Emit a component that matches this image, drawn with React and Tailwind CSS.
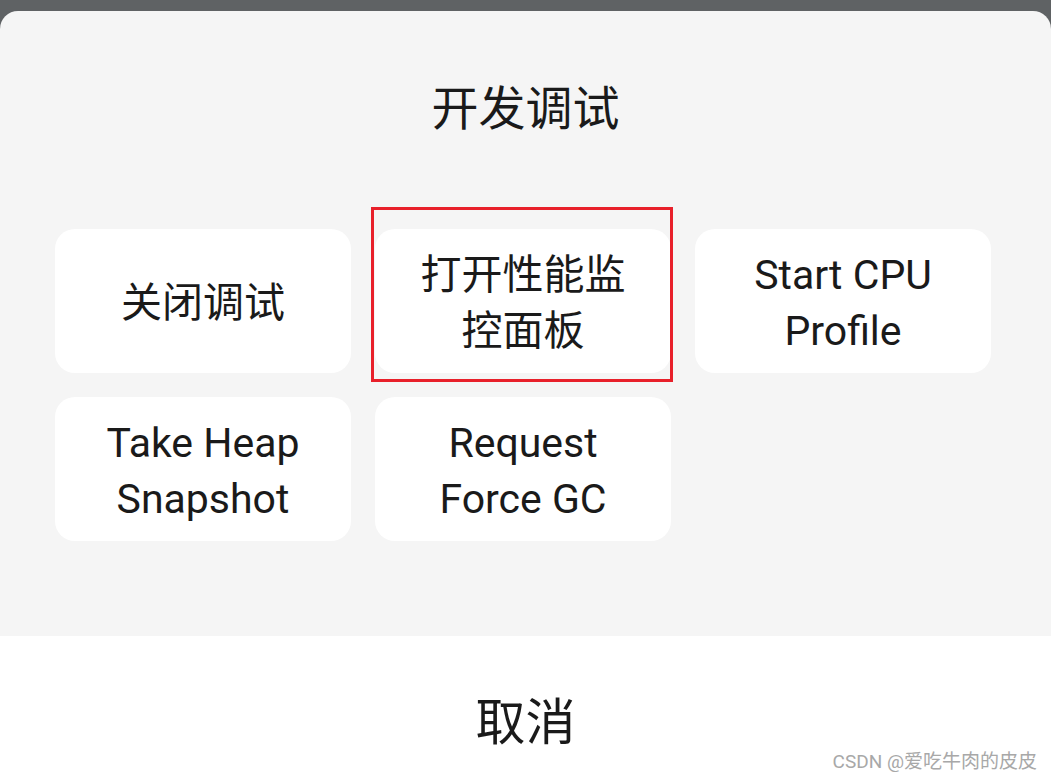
export default function App() {
  const items = [
    ["关闭调试"],
    ["打开性能监", "控面板"],
    ["Start CPU", "Profile"],
    ["Take Heap", "Snapshot"],
    ["Request", "Force GC"],
  ];

  return (
    <div
      className="w-[1051px] h-[781px] bg-[#5f6264] pt-[11px] flex flex-col overflow-hidden relative"
      style={{ fontFamily: 'Roboto, "Noto Sans CJK SC", sans-serif' }}
    >
      {/* Sheet */}
      <div className="h-[625px] bg-[#f5f5f5] rounded-t-[18px] flex flex-col items-center">
        <h1 className="mt-[74px] h-[48px] text-[47px] leading-[48px] text-[#1a1a1a]">开发调试</h1>
        <div className="mt-[96px] ml-[55px] self-start grid grid-cols-[296px_296px_296px] gap-[24px]">
          {items.map((lines, i) => (
            <div
              key={i}
              className="relative h-[144px] pt-[4px] bg-white rounded-[20px] flex flex-col items-center justify-center text-[41px] leading-[56px] text-[#1a1a1a]"
            >
              {lines.map((l) => (
                <span key={l}>{l}</span>
              ))}
              {i === 1 && (
                <div className="absolute top-[-22px] left-[-4px] right-[-2px] bottom-[-9px] border-[3px] border-[#e8202a]" />
              )}
            </div>
          ))}
        </div>
      </div>

      {/* Cancel */}
      <div className="flex-1 bg-white flex items-center justify-center">
        <span className="text-[50px] leading-[56px] text-[#1a1a1a] mt-[28px]">取消</span>
      </div>

      <span className="absolute right-[14px] bottom-[8px] text-[19px] leading-[22px] text-[#a8a8a8]">
        CSDN @爱吃牛肉的皮皮
      </span>
    </div>
  );
}
